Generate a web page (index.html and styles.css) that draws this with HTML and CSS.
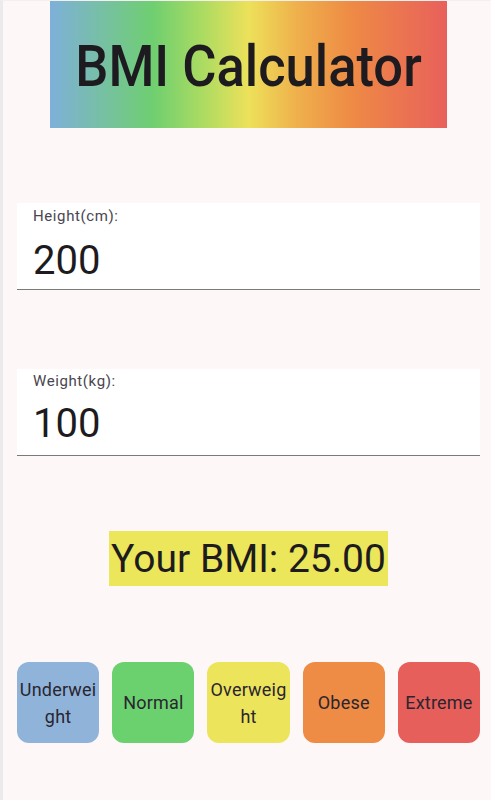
FILE: index.html
```html
<!DOCTYPE html>
<html>
<head>
<meta charset="utf-8">
<link rel="stylesheet" href="styles.css">
</head>
<body>
<div class="screen">
  <header class="banner"><h1 class="title">BMI Calculator</h1></header>
  <div class="field field-height">
    <div class="label">Height(cm):</div>
    <div class="value">200</div>
  </div>
  <div class="field field-weight">
    <div class="label">Weight(kg):</div>
    <div class="value">100</div>
  </div>
  <div class="result-row"><div class="result">Your BMI: 25.00</div></div>
  <div class="cats">
    <div class="cat under">Underweight</div>
    <div class="cat normal">Normal</div>
    <div class="cat over">Overweight</div>
    <div class="cat obese">Obese</div>
    <div class="cat extreme">Extreme</div>
  </div>
</div>
</body>
</html>
```
FILE: styles.css
```css
html, body {
  margin: 0;
  padding: 0;
  background: #fdf7f8;
}
body {
  font-family: Roboto, "Noto Sans", sans-serif;
  color: #1d1b20;
}
.screen {
  width: 491px;
  height: 800px;
  box-sizing: border-box;
  border-left: 3px solid #ebebeb;
  border-top: 1px solid #f4f0f1;
  overflow: hidden;
}
.banner {
  margin-left: 47px;
  width: 397px;
  height: 127px;
  background: linear-gradient(90deg, #7eb0d9 0%, #6fcf70 26%, #a9db62 38%, #ede15a 50%, #efb14c 62%, #ee8a45 76%, #e8605b 100%);
  display: flex;
  align-items: center;
  justify-content: center;
}
.title {
  margin: 0;
  font-size: 52.5px;
  font-weight: 500;
  color: #1d1b20;
  padding-top: 2px;
  transform: scaleY(1.08);
}
.field {
  margin-left: 14px;
  width: 463px;
  height: 87px;
  background: #ffffff;
  border-bottom: 1.5px solid #7a7a7a;
  box-sizing: border-box;
  padding-left: 16px;
}
.field-height { margin-top: 75px; }
.field-weight { margin-top: 79px; }
.label {
  font-size: 15px;
  color: #49454f;
  padding-top: 3px;
  line-height: 20px;
  letter-spacing: 0.6px;
}
.value {
  font-size: 40px;
  line-height: 44px;
  margin-top: 13px;
  color: #1d1b20;
}
.field-weight .label { padding-top: 2px; }
.field-weight .value { margin-top: 11px; }
.result-row {
  display: flex;
  justify-content: center;
  margin-top: 75px;
  padding-left: 3px;
}
.result {
  background: #ebe65a;
  font-size: 39px;
  height: 55px;
  line-height: 57px;
  padding: 0 2px;
  color: #1d1b20;
}
.cats {
  display: flex;
  gap: 13px;
  margin-left: 14px;
  width: 463px;
  margin-top: 76px;
}
.cat {
  flex: 1;
  height: 81px;
  border-radius: 12px;
  display: flex;
  align-items: center;
  justify-content: center;
  text-align: center;
  font-size: 18px;
  line-height: 27px;
  letter-spacing: 0.2px;
  word-break: break-all;
  color: #2a2530;
}
.under { background: #8fb3d9; }
.normal { background: #6bd16f; }
.over { background: #ece45a; }
.obese { background: #ee8b44; }
.extreme { background: #e75f5a; }
```
